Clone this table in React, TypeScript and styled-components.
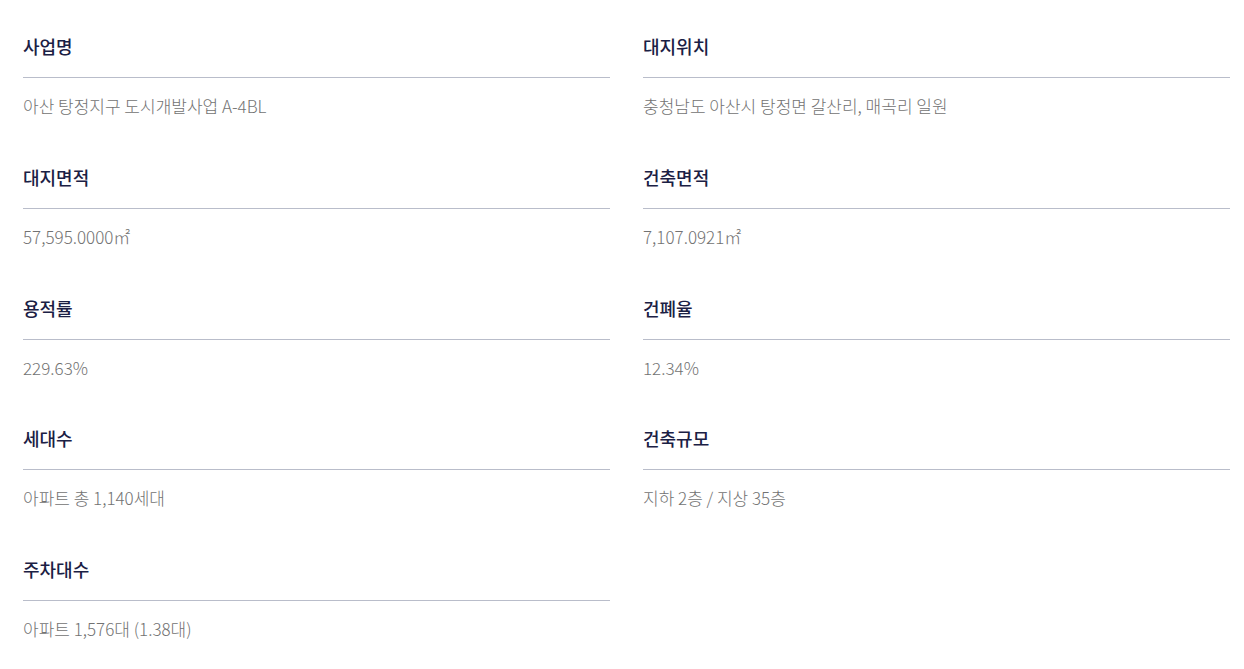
import React, { FC } from "react";
import styled, { createGlobalStyle } from "styled-components";

interface IInfo {
  label: string;
  value: string;
}

const items: IInfo[] = [
  { label: "사업명", value: "아산 탕정지구 도시개발사업 A-4BL" },
  { label: "대지위치", value: "충청남도 아산시 탕정면 갈산리, 매곡리 일원" },
  { label: "대지면적", value: "57,595.0000㎡" },
  { label: "건축면적", value: "7,107.0921㎡" },
  { label: "용적률", value: "229.63%" },
  { label: "건폐율", value: "12.34%" },
  { label: "세대수", value: "아파트 총 1,140세대" },
  { label: "건축규모", value: "지하 2층 / 지상 35층" },
  { label: "주차대수", value: "아파트 1,576대 (1.38대)" }
];

const App: FC = () => (
  <>
    <GlobalStyle />
    <Container>
      {items.map(item => (
        <Item key={item.label}>
          <Label>{item.label}</Label>
          <Value>{item.value}</Value>
        </Item>
      ))}
    </Container>
  </>
);

export default App;

const GlobalStyle = createGlobalStyle`
  body {
    margin: 0;
    background: #fff;
    font-family: "Noto Sans CJK KR", "Noto Sans", sans-serif;
  }
`;

const Container = styled.div`
  display: grid;
  grid-template-columns: 587px 587px;
  column-gap: 33px;
  row-gap: 45.75px;
  padding: 33px 14px 0 23px;
`;

const Item = styled.div`
  display: flex;
  flex-direction: column;
`;

const Label = styled.div`
  font-size: 18px;
  line-height: 26px;
  font-weight: 500;
  color: #1b2044;
  padding-bottom: 18px;
  border-bottom: 1px solid #b9bdca;
`;

const Value = styled.div`
  padding-top: 16px;
  font-size: 17px;
  line-height: 24px;
  font-weight: 300;
  color: #727272;
`;
